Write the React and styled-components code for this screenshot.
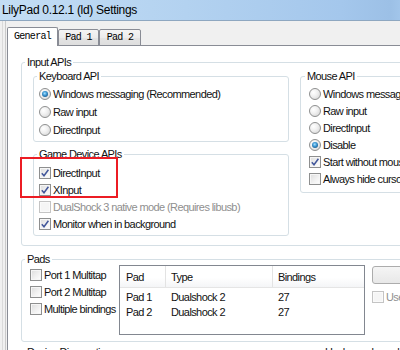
import styled, { createGlobalStyle, css } from 'styled-components'

const GlobalStyle = createGlobalStyle`
  *, *::before, *::after { box-sizing: border-box; }
  html, body { margin: 0; padding: 0; }
  body {
    width: 400px;
    height: 350px;
    overflow: hidden;
    background: #f0f0f0;
    color: #111;
    font-family: 'Liberation Sans', Arial, sans-serif;
    font-size: 11px;
    letter-spacing: -0.6px;
  }
`

const Window = styled.div`
  display: flex;
  flex-direction: column;
  width: 620px;
  height: 350px;
  overflow: hidden;
`

const TitleBar = styled.div`
  flex: none;
  height: 21px;
  padding-left: 2px;
  border-bottom: 1px solid #8ea7c0;
  background: linear-gradient(90deg, #c3ddf5 0%, #b3d2f0 30%, #a4c7ec 55%, #9cc0e6 63%, #b6d8f9 70%, #b3d6f8 100%);
  color: #000;
  font-size: 12px;
  letter-spacing: -0.3px;
  line-height: 20px;
  white-space: nowrap;
`

const Client = styled.div`
  flex: 1;
  display: flex;
  flex-direction: column;
  padding: 6px 0 0 7px;
  background: linear-gradient(90deg, #f0f0f0 0 2px, #dadada 2px 3px, #f0f0f0 3px 5px, #cacaca 5px 6px, #f0f0f0 6px);
`

const TabStrip = styled.div`
  position: relative;
  z-index: 1;
  display: flex;
  align-items: flex-end;
  height: 19px;
  margin-bottom: -1px;
`

const Tab = styled.div`
  width: ${p => p.$w}px;
  height: ${p => (p.$active ? 19 : 17)}px;
  border: 1px solid #898c95;
  border-bottom: ${p => (p.$active ? 'none' : '1px solid #898c95')};
  border-radius: 2px 2px 0 0;
  background: ${p => (p.$active ? '#fff' : 'linear-gradient(#f4f4f4, #ececec 50%, #e4e4e4 51%, #dedede)')};
  color: #000;
  font-family: 'Liberation Mono', 'Courier New', monospace;
  font-size: 10px;
  letter-spacing: -0.7px;
  line-height: ${p => (p.$active ? 17 : 15)}px;
  text-align: center;
  white-space: nowrap;
`

const Panel = styled.div`
  background: #fff;
  border: 1px solid #898c95;
  padding: 9px 0 0 13px;
`

const Group = styled.fieldset`
  margin: ${p => p.$mt || 0}px 0 0;
  padding: ${p => p.$pad};
  min-width: 0;
  width: ${p => p.$w}px;
  ${p => p.$h && css`height: ${p.$h}px;`}
  border: 1px solid #d5dfe5;
  border-radius: 3px;
`

const Legend = styled.legend`
  margin-left: ${p => p.$shift ?? -2}px;
  padding: 0 2px;
  line-height: 14px;
  white-space: nowrap;
`

const Columns = styled.div`
  display: flex;
  align-items: flex-start;
  gap: 11px;
`

const Stack = styled.div`
  display: flex;
  flex-direction: column;
  width: ${p => (p.$w ? `${p.$w}px` : 'auto')};
  flex: none;
  ${p => p.$ml && css`margin-left: ${p.$ml}px;`}
`

const Option = styled.label`
  display: flex;
  align-items: center;
  height: ${p => p.$h || 17}px;
  margin-top: ${p => p.$mt || 0}px;
  color: ${p => (p.$disabled ? '#8f8f8f' : '#111')};
  white-space: nowrap;
`

const RadioDot = styled.span`
  flex: none;
  display: grid;
  place-items: center;
  width: 12px;
  height: 12px;
  margin-right: 2px;
  border: 1px solid #8e8f8f;
  border-radius: 50%;
  background: radial-gradient(circle at 35% 35%, #ffffff 0, #f1f1f1 40%, #d0d0d0 100%);
  &::after {
    content: '';
    display: ${p => (p.$on ? 'block' : 'none')};
    width: 6px;
    height: 6px;
    border-radius: 50%;
    background: radial-gradient(circle at 45% 40%, #a9e2ff 0, #3c98d4 40%, #124574 90%);
  }
`

const Box = styled.span`
  flex: none;
  display: grid;
  place-items: center;
  width: 12px;
  height: 12px;
  margin-right: 2px;
  border: 1px solid ${p => (p.$disabled ? '#c4c4c4' : '#8e8f8f')};
  background: ${p => (p.$disabled ? '#f5f5f5' : 'linear-gradient(135deg, #dcdcdc 0%, #f1f1f1 55%, #ffffff 100%)')};
  box-shadow: inset 0 0 0 1px ${p => (p.$disabled ? '#fafafa' : '#f6f6f6')};
`

const Highlight = styled.div`
  position: relative;
  &::after {
    content: '';
    position: absolute;
    top: -7px;
    left: -19px;
    width: 98px;
    height: 41px;
    border: 2px solid #ec1c24;
    pointer-events: none;
  }
`

const PadsBody = styled.div`
  display: flex;
  align-items: flex-start;
`

const List = styled.div`
  flex: none;
  width: 246px;
  height: 70px;
  margin-top: -1px;
  border: 1px solid #828790;
  background: #fff;
`

const ListRow = styled.div`
  display: grid;
  grid-template-columns: 46px 107px 1fr;
  height: ${p => (p.$head ? 22 : 15)}px;
  ${p => p.$head
    ? css`
        background: linear-gradient(#ffffff 0, #ffffff 55%, #f4f5f7 100%);
        border-bottom: 1px solid #e5e5e5;
      `
    : css`
        &:nth-child(2) { margin-top: 1px; }
      `}
`

const Cell = styled.span`
  display: flex;
  align-items: center;
  padding-left: ${p => p.$pl || 5}px;
  white-space: nowrap;
  ${p => p.$sep && css`border-right: 1px solid #e3e3e3;`}
`

const Button = styled.button`
  width: 120px;
  height: 18px;
  padding: 0;
  border: 1px solid #acacac;
  border-radius: 3px;
  background: linear-gradient(#f5f5f5, #e8e8e8);
  font: inherit;
  letter-spacing: inherit;
  color: #111;
`

const BottomRow = styled.div`
  display: flex;
  gap: 4px;
  margin-top: 3px;
`

const CheckMark = () => (
  <svg width="8" height="8" viewBox="0 0 8 8">
    <path d="M0.8 4.2 L3 6.8 L7.4 0.8" fill="none" stroke="#41569a" strokeWidth="1.5" />
  </svg>
)

const Radio = ({ label, on, h }) => (
  <Option $h={h}>
    <RadioDot $on={on} />
    {label}
  </Option>
)

const Check = ({ label, on, disabled, h, mt }) => (
  <Option $h={h} $mt={mt} $disabled={disabled}>
    <Box $disabled={disabled}>{on && <CheckMark />}</Box>
    {label}
  </Option>
)

const pads = [
  { pad: 'Pad 1', type: 'Dualshock 2', bindings: 27 },
  { pad: 'Pad 2', type: 'Dualshock 2', bindings: 27 },
]

export default function App() {
  return (
    <>
      <GlobalStyle />
      <Window>
        <TitleBar>LilyPad 0.12.1 (ld) Settings</TitleBar>
        <Client>
          <TabStrip>
            <Tab $w={51} $active>General</Tab>
            <Tab $w={41}>Pad 1</Tab>
            <Tab $w={42}>Pad 2</Tab>
          </TabStrip>
          <Panel>
            <Group $w={540} $pad="0 0 9px 11px">
              <Legend $shift={-8}>Input APIs</Legend>
              <Columns>
                <Stack $w={256}>
                  <Group $w={256} $pad="2px 0 2px 5px">
                    <Legend>Keyboard API</Legend>
                    <Radio h={18} on label="Windows messaging (Recommended)" />
                    <Radio h={18} label="Raw input" />
                    <Radio h={18} label="DirectInput" />
                  </Group>
                  <Group $w={256} $mt={5} $pad="3px 0 3px 5px">
                    <Legend>Game Device APIs</Legend>
                    <Highlight>
                      <Check on label="DirectInput" />
                      <Check on label="XInput" />
                    </Highlight>
                    <Check disabled label="DualShock 3 native mode (Requires libusb)" />
                    <Check on label="Monitor when in background" />
                  </Group>
                </Stack>
                <Group $w={180} $pad="2px 0 5px 8px">
                  <Legend $shift={-4}>Mouse API</Legend>
                  <Radio label="Windows messaging" />
                  <Radio label="Raw input" />
                  <Radio label="DirectInput" />
                  <Radio on label="Disable" />
                  <Check on label="Start without mouse focus" />
                  <Check label="Always hide cursor" />
                </Group>
              </Columns>
            </Group>

            <Group $w={540} $mt={6} $pad="0 0 6px 8px">
              <Legend $shift={-5}>Pads</Legend>
              <PadsBody>
                <Stack $w={89}>
                  <Check label="Port 1 Multitap" />
                  <Check label="Port 2 Multitap" />
                  <Check label="Multiple bindings" />
                </Stack>
                <List>
                  <ListRow $head>
                    <Cell $pl={6} $sep>Pad</Cell>
                    <Cell $sep>Type</Cell>
                    <Cell>Bindings</Cell>
                  </ListRow>
                  {pads.map(p => (
                    <ListRow key={p.pad}>
                      <Cell $pl={6}>{p.pad}</Cell>
                      <Cell>{p.type}</Cell>
                      <Cell>{p.bindings}</Cell>
                    </ListRow>
                  ))}
                </List>
                <Stack $ml={7}>
                  <Button>Load Bindings</Button>
                  <Check disabled mt={4} label="Use analog mode" />
                </Stack>
              </PadsBody>
            </Group>

            <BottomRow>
              <Group $w={294} $h={60} $pad="0 0 0 8px">
                <Legend $shift={-5}>Device Diagnostics</Legend>
              </Group>
              <Group $w={220} $h={60} $pad="0 0 0 8px">
                <Legend $shift={-5}>Hacks - only enable if needed</Legend>
              </Group>
            </BottomRow>
          </Panel>
        </Client>
      </Window>
    </>
  )
}
